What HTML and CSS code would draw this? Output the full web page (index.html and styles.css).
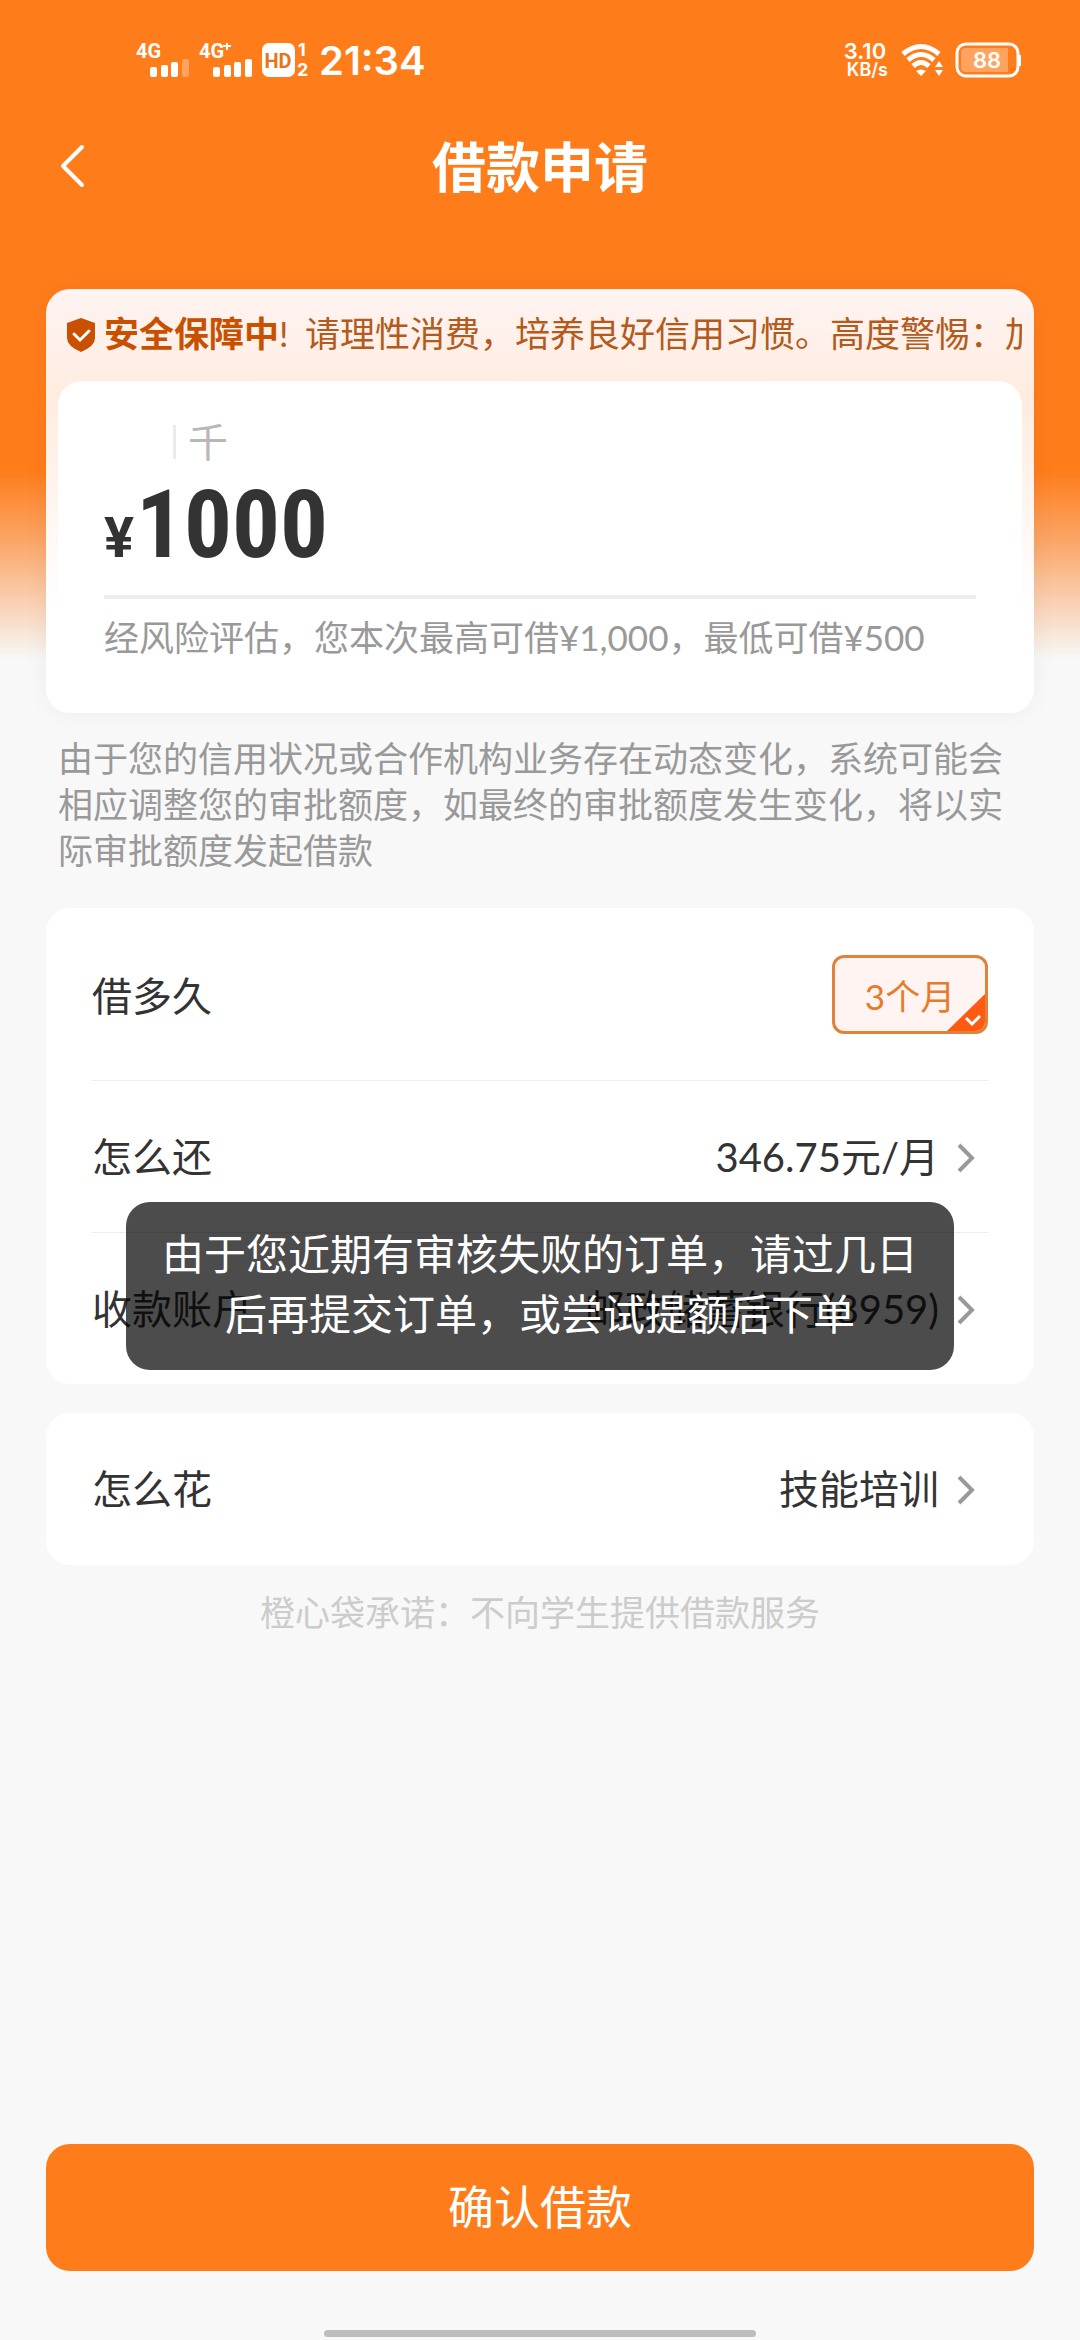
FILE: index.html
```html
<!DOCTYPE html>
<html lang="zh-CN">
<head>
<meta charset="utf-8">
<meta name="viewport" content="width=device-width, initial-scale=1">
<title>借款申请</title>
<link rel="stylesheet" href="styles.css">
</head>
<body>
<div class="status">
  <div class="status-group">
    <svg class="icon" width="54" height="36" viewBox="0 0 54 36" fill="#fff">
      <text class="net" x="0" y="16">4G</text>
      <rect x="14" y="25" width="7" height="10" rx="2"/>
      <rect x="25" y="23" width="7" height="12" rx="2"/>
      <rect x="35" y="20" width="7" height="15" rx="2"/>
      <rect x="46" y="17" width="7" height="18" rx="2" opacity=".3"/>
    </svg>
    <svg class="icon" width="54" height="36" viewBox="0 0 54 36" fill="#fff">
      <text class="net" x="0" y="16">4G</text>
      <path d="M28 1v7M24 4h8" stroke="#fff" stroke-width="2"/>
      <rect x="14" y="25" width="7" height="10" rx="2"/>
      <rect x="25" y="23" width="7" height="12" rx="2"/>
      <rect x="35" y="20" width="7" height="15" rx="2"/>
      <rect x="46" y="17" width="7" height="18" rx="2"/>
    </svg>
    <svg class="icon" width="48" height="36" viewBox="0 0 48 36" fill="#fff">
      <rect x="0" y="1" width="33" height="34" rx="7"/>
      <text class="hd" x="16" y="26" text-anchor="middle">HD</text>
      <text class="sim" x="36" y="14">1</text>
      <text class="sim" x="35" y="34">2</text>
    </svg>
    <span class="time">21:34</span>
  </div>
  <div class="status-group status-right">
    <div class="speed"><span class="speed-num">3.10</span><span class="speed-unit">KB/s</span></div>
    <svg class="icon" width="42" height="36" viewBox="0 0 42 36" fill="none" stroke="#fff">
      <path d="M2 12Q20 -3 38 12" stroke-width="5"/>
      <path d="M7 18Q20 7 33 18" stroke-width="5"/>
      <path d="M12 24Q20 17 28 24" stroke-width="5"/>
      <path d="M15 29Q20 26 25 29L20 34Z" fill="#fff" stroke="none"/>
      <path d="M34 25l4-6 4 6ZM34 28l4 6 4-6Z" fill="#fff" stroke="none"/>
    </svg>
    <svg class="icon" width="66" height="36" viewBox="0 0 66 36">
      <rect x="1" y="2" width="61" height="32" rx="9" fill="none" stroke="#fff" stroke-width="3"/>
      <path d="M10 6H52V30H10Q5 30 5 25V11Q5 6 10 6Z" fill="#fff" opacity=".3"/>
      <path d="M64 13v11" stroke="#fff" stroke-width="2"/>
      <text class="battery" x="31" y="26" text-anchor="middle">88</text>
    </svg>
  </div>
</div>

<header class="nav">
  <button class="back" type="button" aria-label="返回">
    <svg width="26" height="44" viewBox="0 0 26 44" fill="none" stroke="#fff" stroke-width="4" stroke-linecap="round" stroke-linejoin="round"><path d="M22 3L3 22L22 41"/></svg>
  </button>
  <h1 class="title">借款申请</h1>
</header>

<main class="content">
  <section class="amount-card">
    <div class="notice">
      <svg class="shield" width="30" height="36" viewBox="0 0 30 36"><path d="M15 1L29 6V21Q29 29 15 35Q1 29 1 21V6Z" fill="#c95000"/><path d="M8 17l6 6 9-9" fill="none" stroke="#fff" stroke-width="3" stroke-linecap="round"/></svg>
      <p class="notice-text"><strong>安全保障中</strong><span class="bang">!</span><span>请理性消费，培养良好信用习惯。高度警惕：加</span></p>
    </div>
    <div class="amount-panel">
      <div class="digit-hint">千</div>
      <div class="amount"><span class="currency">¥</span><span class="figure">1000</span></div>
      <p class="limit">经风险评估，您本次最高可借¥1,000，最低可借¥500</p>
    </div>
  </section>

  <p class="remark">由于您的信用状况或合作机构业务存在动态变化，系统可能会相应调整您的审批额度，如最终的审批额度发生变化，将以实际审批额度发起借款</p>

  <section class="card">
    <div class="row row-term">
      <span>借多久</span>
      <label class="chip">
        <input class="chip-input" type="radio" name="term" checked>3个月
        <svg class="chip-mark" width="38" height="37" viewBox="0 0 38 37"><path d="M38 0V37H0Z" fill="#ff5a12"/><path d="M19 24l6 6 8-8" fill="none" stroke="#fff" stroke-width="3"/></svg>
      </label>
    </div>
    <button class="row" type="button"><span>怎么还</span><span class="value">346.75元/月</span><svg class="chevron" width="18" height="30" viewBox="0 0 18 30"><path d="M2 2L15 15L2 28"/></svg></button>
    <button class="row" type="button"><span>收款账户</span><span class="value">邮政储蓄银行(8959)</span><svg class="chevron" width="18" height="30" viewBox="0 0 18 30"><path d="M2 2L15 15L2 28"/></svg></button>
  </section>

  <section class="card">
    <button class="row" type="button"><span>怎么花</span><span class="value">技能培训</span><svg class="chevron" width="18" height="30" viewBox="0 0 18 30"><path d="M2 2L15 15L2 28"/></svg></button>
  </section>

  <p class="promise">橙心袋承诺：不向学生提供借款服务</p>
</main>

<footer class="footer">
  <button class="submit" type="button">确认借款</button>
  <div class="home-bar"></div>
</footer>

<div class="toast" role="alert">由于您近期有审核失败的订单，请过几日后再提交订单，或尝试提额后下单</div>
</body>
</html>
```
FILE: styles.css
```css
* {
  box-sizing: border-box;
  margin: 0;
}

body {
  position: relative;
  display: flex;
  flex-direction: column;
  min-height: 100vh;
  background: linear-gradient(#ff7c1a 0, #ff7c1a 470px, #fba566 540px, #f8f8f8 660px) no-repeat #f8f8f8;
  color: #333;
  font-family: Lato, "Noto Sans CJK SC", sans-serif;
  font-size: 35px;
}

button {
  border: 0;
  padding: 0;
  background: none;
  color: inherit;
  font: inherit;
}

svg {
  flex: none;
}

.icon {
  overflow: visible;
}

.status {
  display: flex;
  justify-content: space-between;
  padding: 36px 58px 0 136px;
  height: 84px;
  color: #fff;
  font-family: Inter, sans-serif;
}

.status-group {
  display: flex;
  align-items: center;
  gap: 9px;
}

.status-right {
  gap: 13px;
}

.net {
  font: 700 20px Roboto, sans-serif;
}

.hd {
  fill: #e8741c;
  font: 700 20px Roboto, sans-serif;
}

.sim {
  font: 700 18px Inter, sans-serif;
}

.time {
  font-size: 40px;
  font-weight: 600;
}

.speed {
  display: flex;
  flex-direction: column;
  gap: 1px;
  font-weight: 600;
}

.speed-num {
  font-size: 22px;
  line-height: 18px;
}

.speed-unit {
  padding-left: 3px;
  font-size: 18px;
  line-height: 18px;
}

.battery {
  fill: #fff;
  font: 600 22px Inter, sans-serif;
}

.nav {
  display: grid;
  grid-template-columns: 86px 1fr 86px;
  align-items: center;
  height: 164px;
}

.back {
  display: flex;
  justify-content: flex-end;
}

.title {
  padding-top: 4px;
  text-align: center;
  color: #fff;
  font-size: 54px;
  font-weight: 700;
  line-height: 60px;
}

.content {
  display: flex;
  flex-direction: column;
  padding: 41px 46px 0;
}

.amount-card {
  padding: 0 12px;
  border-radius: 24px;
  background: linear-gradient(#fff4f2 0, #ffece0 110px, #fff 320px);
  box-shadow: 0 0 24px rgba(0, 0, 0, 0.05);
}

.notice {
  display: flex;
  align-items: center;
  gap: 8px;
  height: 92px;
  padding-left: 8px;
}

.notice-text {
  display: flex;
  overflow: hidden;
  padding-bottom: 4px;
  white-space: nowrap;
  color: #b35a1c;
  line-height: 48px;
}

.notice-text strong {
  color: #c95000;
}

.bang {
  flex: none;
  width: 26px;
}

.amount-panel {
  padding: 44px 46px 52px;
  border-radius: 24px;
  background: #fff;
}

.digit-hint {
  margin: 0 0 6px 69px;
  padding-left: 12px;
  border-left: 3px solid #ebebeb;
  color: #b8b8b8;
  font-size: 40px;
  line-height: 34px;
}

.amount {
  display: flex;
  align-items: baseline;
  gap: 2px;
  height: 134px;
  border-bottom: 4px solid #ededed;
  font-family: Roboto, sans-serif;
  font-weight: 700;
  line-height: 120px;
}

.currency {
  font-size: 56px;
}

.figure {
  font-family: "Roboto Condensed", "Liberation Sans Narrow", Roboto, sans-serif;
  font-size: 95px;
}

.limit {
  padding-top: 14px;
  color: #999;
  line-height: 48px;
}

.remark {
  padding: 22px 12px 35px;
  color: #999;
  line-height: 46px;
}

.card {
  margin-bottom: 29px;
  padding: 0 46px;
  border-radius: 24px;
  background: #fff;
}

.row {
  display: flex;
  align-items: center;
  width: 100%;
  height: 152px;
  padding-bottom: 4px;
  font-size: 40px;
}

.row + .row {
  border-top: 1px solid #ececec;
}

.row-term {
  justify-content: space-between;
  height: 172px;
  padding: 0;
}

.value {
  margin-left: auto;
}

.chevron {
  margin: 6px 13px 0 18px;
  fill: none;
  stroke: #999;
  stroke-width: 4;
}

.chip {
  position: relative;
  display: flex;
  align-items: center;
  justify-content: center;
  width: 156px;
  height: 79px;
  overflow: hidden;
  border: 3px solid #e2813a;
  border-radius: 12px;
  background: #fff4f1;
  color: #e87b2a;
  font-size: 35px;
}

.chip-input {
  position: absolute;
  appearance: none;
  margin: 0;
}

.chip-mark {
  position: absolute;
  right: 0;
  bottom: 0;
}

.promise {
  text-align: center;
  color: #ccc;
  line-height: 36px;
}

.footer {
  display: flex;
  flex-direction: column;
  align-items: center;
  gap: 59px;
  margin-top: auto;
  padding: 0 46px 3px;
}

.submit {
  width: 100%;
  height: 127px;
  padding-bottom: 8px;
  border-radius: 24px;
  background: #ff7c1a;
  color: #fff;
  font-size: 46px;
}

.home-bar {
  width: 432px;
  height: 7px;
  border-radius: 4px;
  background: #bdbdbd;
}

.toast {
  position: absolute;
  top: 1202px;
  left: 50%;
  width: 828px;
  transform: translateX(-50%);
  padding: 22px 36px 26px;
  border-radius: 24px;
  background: rgba(0, 0, 0, 0.7);
  color: #fff;
  font-size: 42px;
  line-height: 60px;
  text-align: center;
}
```
